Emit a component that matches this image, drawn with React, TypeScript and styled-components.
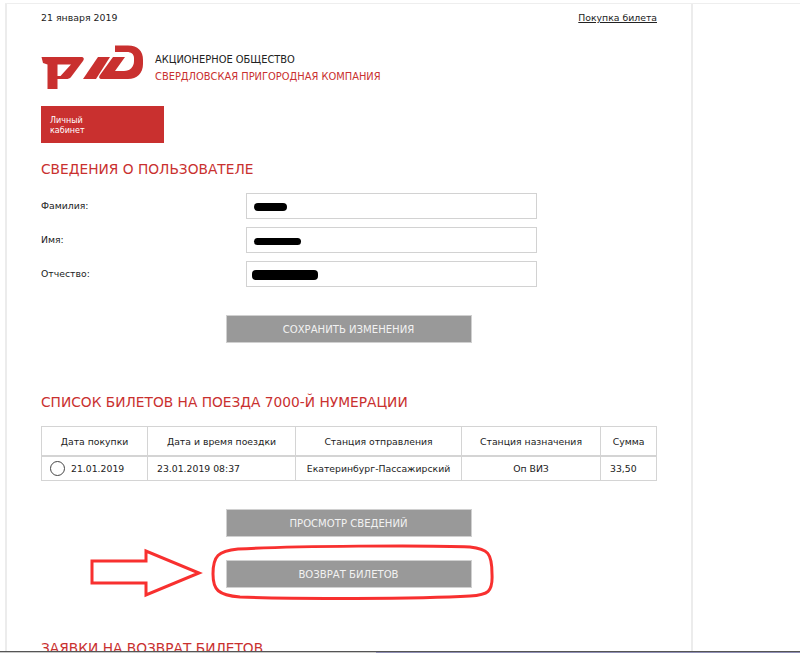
import React from "react";
import styled, { createGlobalStyle } from "styled-components";

const GlobalStyle = createGlobalStyle`
  html, body {
    margin: 0;
    padding: 0;
    background: #fff;
  }
  body {
    font-family: "DejaVu Sans", Verdana, sans-serif;
    color: #222;
    font-size: 9.4px;
  }
`;

const red = "#c9302f";
const gray = "#999999";

const Screen = styled.div`
  position: relative;
  width: 800px;
  height: 653px;
  overflow: hidden;
  background: #fff;
  padding-top: 3px;
  box-sizing: border-box;
`;

const TopLine = styled.div`
  height: 1px;
  margin-left: 5px;
  background: #eeeeee;
`;

const Panel = styled.div`
  width: 688px;
  height: 660px;
  box-sizing: border-box;
  margin-left: 5px;
  padding: 8px 34px 0 34px;
  border-left: 2px solid #ececec;
  border-right: 2px solid #ececec;
`;

const TopRow = styled.div`
  display: flex;
  justify-content: space-between;
  height: 15px;
  line-height: 11px;
`;

const TopLink = styled.a`
  color: #222;
  font-size: 9.3px;
  text-decoration: underline;
`;

const Brand = styled.div`
  display: flex;
  align-items: flex-start;
  margin-top: 18px;
  height: 61px;
`;

const Logo = styled.svg`
  width: 103px;
  height: 45px;
  flex: none;
  display: block;
`;

const BrandText = styled.div`
  margin: 6px 0 0 11px;
  font-size: 9.9px;
  line-height: 17px;
`;

const BrandSub = styled.div`
  color: ${red};
`;

const CabinetTab = styled.div`
  width: 123px;
  height: 37px;
  box-sizing: border-box;
  padding: 10px 9px 0;
  background: ${red};
  color: #fff;
  font-size: 8px;
  line-height: 10px;
`;

const SectionTitle = styled.h2<{ $top: number }>`
  margin: ${(p) => p.$top}px 0 0;
  color: ${red};
  font-weight: normal;
  font-size: 13.75px;
  line-height: 16px;
  white-space: nowrap;
`;

const Form = styled.div`
  margin-top: 16px;
  display: flex;
  flex-direction: column;
  gap: 8px;
`;

const FormRow = styled.div`
  display: flex;
  align-items: center;
`;

const FieldLabel = styled.label`
  width: 205px;
  margin-top: -2px;
  font-size: 9.3px;
`;

const FieldBox = styled.div`
  position: relative;
  width: 291px;
  height: 26px;
  box-sizing: border-box;
  border: 1px solid #d2d2d2;
  background: #fff;
`;

const Scribble = styled.div<{ $left: number; $width: number; $height: number }>`
  position: absolute;
  left: ${(p) => p.$left}px;
  top: ${(p) => 13 - p.$height / 2}px;
  width: ${(p) => p.$width}px;
  height: ${(p) => p.$height}px;
  border-radius: 4px;
  background: #000;
`;

const ButtonRow = styled.div<{ $top: number }>`
  display: flex;
  justify-content: center;
  margin-top: ${(p) => p.$top}px;
  padding-right: 1px;
`;

const GrayButton = styled.button`
  width: 246px;
  height: 28px;
  padding: 0;
  border: 1px solid #d0d0d0;
  background: ${gray};
  color: #f2f2f2;
  font-family: inherit;
  font-size: 10.1px;
`;

const Tickets = styled.table`
  width: 616px;
  margin-top: 16px;
  border-collapse: collapse;
  table-layout: fixed;
  font-size: 9.3px;
`;

const HeadCell = styled.th`
  height: 28px;
  padding: 0;
  border: 1px solid #d4d4d4;
  font-weight: normal;
  text-align: center;
`;

const Cell = styled.td<{ $align?: string }>`
  height: 23px;
  padding: 0 0 0 ${(p) => (p.$align === "center" ? 0 : 9)}px;
  border: 1px solid #d4d4d4;
  border-top-width: 2px;
  text-align: ${(p) => p.$align || "left"};
`;

const RadioWrap = styled.div`
  display: flex;
  align-items: center;
  gap: 6px;
  margin-left: -1px;
`;

const RadioMark = styled.span`
  display: block;
  width: 15px;
  height: 15px;
  box-sizing: border-box;
  border: 1px solid #444;
  border-radius: 50%;
`;

const Annotation = styled.svg`
  position: absolute;
  left: 0;
  top: 0;
  width: 800px;
  height: 653px;
  pointer-events: none;
`;

const Taskbar = styled.div`
  position: absolute;
  left: 0;
  right: 0;
  bottom: 0;
  height: 2px;
  border-top: 1px solid #555;
  background: linear-gradient(90deg, #c9c9c9 0, #c9c9c9 47%, #8f8fb5 47%, #8f8fb5 100%);
  box-sizing: border-box;
`;

const columns = [106, 148, 166, 139, 56];

export default function App() {
  return (
    <Screen>
      <GlobalStyle />
      <TopLine />
      <Panel>
        <TopRow>
          <span>21 января 2019</span>
          <TopLink href="#">Покупка билета</TopLink>
        </TopRow>
        <Brand>
          <Logo viewBox="41 45 103 45" aria-label="РЖД">
            <path
              fill={red}
              fillRule="evenodd"
              d="M41.5 57 H81 C84 57 84.5 59 83 61 L71 77 C70 78.5 68 79 66 79 H57.5 V89 H47.5 V64.5 L43 63 Z M57.5 64.5 H71 L60.5 76 H57.5 Z"
            />
            <path fill={red} d="M98 57 H110 L96 79 H83 Z" />
            <path
              fill={red}
              d="M115 45.5 H128 C138 45.5 143 51 143 60 V64 C143 73 137 79 128 79 H102 C99 79 98.5 77 100 75 L113 57 H125 L115 71 H124 C130 71 134 67 134 61 V58 C134 54 131 52 127 52 H115 Z"
            />
          </Logo>
          <BrandText>
            <div>АКЦИОНЕРНОЕ ОБЩЕСТВО</div>
            <BrandSub>СВЕРДЛОВСКАЯ ПРИГОРОДНАЯ КОМПАНИЯ</BrandSub>
          </BrandText>
        </Brand>
        <CabinetTab>
          Личный
          <br />
          кабинет
        </CabinetTab>
        <SectionTitle $top={18}>СВЕДЕНИЯ О ПОЛЬЗОВАТЕЛЕ</SectionTitle>
        <Form>
          <FormRow>
            <FieldLabel>Фамилия:</FieldLabel>
            <FieldBox>
              <Scribble $left={7} $width={33} $height={8} />
            </FieldBox>
          </FormRow>
          <FormRow>
            <FieldLabel>Имя:</FieldLabel>
            <FieldBox>
              <Scribble $left={7} $width={47} $height={7} />
            </FieldBox>
          </FormRow>
          <FormRow>
            <FieldLabel>Отчество:</FieldLabel>
            <FieldBox>
              <Scribble $left={5} $width={66} $height={10} />
            </FieldBox>
          </FormRow>
        </Form>
        <ButtonRow $top={28}>
          <GrayButton>СОХРАНИТЬ ИЗМЕНЕНИЯ</GrayButton>
        </ButtonRow>
        <SectionTitle $top={51}>СПИСОК БИЛЕТОВ НА ПОЕЗДА 7000-Й НУМЕРАЦИИ</SectionTitle>
        <Tickets>
          <colgroup>
            {columns.map((w) => (
              <col key={w} width={w} />
            ))}
          </colgroup>
          <thead>
            <tr>
              <HeadCell>Дата покупки</HeadCell>
              <HeadCell>Дата и время поездки</HeadCell>
              <HeadCell>Станция отправления</HeadCell>
              <HeadCell>Станция назначения</HeadCell>
              <HeadCell>Сумма</HeadCell>
            </tr>
          </thead>
          <tbody>
            <tr>
              <Cell>
                <RadioWrap>
                  <RadioMark />
                  21.01.2019
                </RadioWrap>
              </Cell>
              <Cell>23.01.2019 08:37</Cell>
              <Cell $align="center">Екатеринбург-Пассажирский</Cell>
              <Cell $align="center">Оп ВИЗ</Cell>
              <Cell>33,50</Cell>
            </tr>
          </tbody>
        </Tickets>
        <ButtonRow $top={28}>
          <GrayButton>ПРОСМОТР СВЕДЕНИЙ</GrayButton>
        </ButtonRow>
        <ButtonRow $top={23}>
          <GrayButton>ВОЗВРАТ БИЛЕТОВ</GrayButton>
        </ButtonRow>
        <SectionTitle $top={52}>ЗАЯВКИ НА ВОЗВРАТ БИЛЕТОВ</SectionTitle>
      </Panel>
      <Annotation viewBox="0 0 800 653">
        <path
          d="M92 561 H146 V551 L199 573 L146 595 V583 H92 Z"
          fill="none"
          stroke="#f8302f"
          strokeWidth="3"
        />
        <path
          d="M238 549 C290 546 430 545 470 547 C488 549 492 553 492 574 C493 592 488 595 470 596 C420 599 290 599 240 597 C218 595 213 590 213 574 C213 556 218 551 238 549 Z"
          fill="none"
          stroke="#f8302f"
          strokeWidth="3"
        />
      </Annotation>
      <Taskbar />
    </Screen>
  );
}
